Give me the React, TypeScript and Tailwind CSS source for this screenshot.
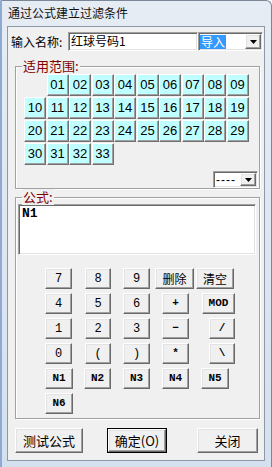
import React from 'react';

const raised =
  'border border-t-white border-l-white border-b-[#696969] border-r-[#696969] shadow-[inset_-1px_-1px_0_#a0a0a0,inset_1px_1px_0_#e3e3e3]';
const sunken =
  'border border-t-[#a0a0a0] border-l-[#a0a0a0] border-b-white border-r-white shadow-[inset_1px_1px_0_#696969,inset_-1px_-1px_0_#e3e3e3]';

const nums = Array.from({ length: 33 }, (_, i) => String(i + 1).padStart(2, '0'));

// calculator rows: label, width/margin classes, bold?
const calcRows: { t: string; c: string; b?: boolean }[][] = [
  [
    { t: '7', c: 'ml-[27px] w-[27px]' },
    { t: '8', c: 'ml-[13px] w-[26px]' },
    { t: '9', c: 'ml-[12px] w-[27px]' },
    { t: '删除', c: 'ml-[5px] w-[39px]' },
    { t: '清空', c: 'ml-[2px] w-[38px]' },
  ],
  [
    { t: '4', c: 'ml-[27px] w-[27px]' },
    { t: '5', c: 'ml-[13px] w-[26px]' },
    { t: '6', c: 'ml-[12px] w-[27px]' },
    { t: '+', c: 'ml-[12px] w-[27px]', b: true },
    { t: 'MOD', c: 'ml-[13px] w-[33px]', b: true },
  ],
  [
    { t: '1', c: 'ml-[27px] w-[27px]' },
    { t: '2', c: 'ml-[13px] w-[26px]' },
    { t: '3', c: 'ml-[12px] w-[27px]' },
    { t: '−', c: 'ml-[12px] w-[27px]', b: true },
    { t: '/', c: 'ml-[20px] w-[26px]', b: true },
  ],
  [
    { t: '0', c: 'ml-[27px] w-[27px]' },
    { t: '(', c: 'ml-[13px] w-[26px]' },
    { t: ')', c: 'ml-[12px] w-[27px]' },
    { t: '*', c: 'ml-[12px] w-[27px]', b: true },
    { t: '\\', c: 'ml-[20px] w-[26px]', b: true },
  ],
  [
    { t: 'N1', c: 'ml-[27px] w-[28px]', b: true },
    { t: 'N2', c: 'ml-[11px] w-[27px]', b: true },
    { t: 'N3', c: 'ml-[12px] w-[27px]', b: true },
    { t: 'N4', c: 'ml-[12px] w-[27px]', b: true },
    { t: 'N5', c: 'ml-[12px] w-[28px]', b: true },
  ],
  [{ t: 'N6', c: 'ml-[27px] w-[28px]', b: true }],
];

const DropArrow = () => (
  <svg width="7" height="4" viewBox="0 0 7 4">
    <polygon points="0,0 7,0 3.5,4" fill="#000" />
  </svg>
);

const App = () => {
  return (
    <div className="w-[272px] h-[467px] overflow-hidden bg-[linear-gradient(180deg,#e6ecf4,#d5e0ee)] border-l-[2px] border-l-[#8eaad3] rounded-tr-[6px] border-t border-r border-[#7a8797] font-['Noto_Sans_CJK_SC',sans-serif] text-[12px] text-black">
      {/* title bar */}
      <div className="h-[25px] pl-[6px] pt-[5px] leading-[14px] text-[12px] text-[#111]">通过公式建立过滤条件</div>

      <div className="ml-[5px] w-[258px] h-[435px] bg-[#f0f0f0] border border-[#8c99a8]">
        {/* name row */}
        <div className="mt-[5px] pl-[3px] flex items-start h-[19px]">
          <div className="w-[57px] leading-[19px]">输入名称:</div>
          <div className={`w-[130px] h-[19px] bg-white ${sunken} pl-[2px] leading-[15px] text-[12px]`}>红球号码1</div>
          <div className={`w-[65px] h-[19px] bg-white ${sunken} flex items-center pl-[1px] pr-[1px]`}>
            <span className="bg-[#3399ff] text-white leading-[14px] w-[26px] pl-[1px]">导入</span>
            <div className={`ml-auto w-[16px] h-[15px] bg-[#f0f0f0] ${raised} flex items-center justify-center`}>
              <DropArrow />
            </div>
          </div>
        </div>

        {/* range group */}
        <div className="relative mt-[15px] ml-[7px] w-[245px] border border-[#a0a0a0] shadow-[1px_1px_0_#fff,inset_1px_1px_0_#fff] pl-[8px] pt-[7px] flex flex-col">
          <span className="absolute -top-[9px] left-[6px] bg-[#f0f0f0] px-[1px] leading-[16px] text-[13px] text-[#800000]">适用范围:</span>
          <div className="grid grid-cols-[repeat(10,22.5px)] gap-y-[1px] font-['Liberation_Sans',sans-serif] text-[13px]">
            {nums.map((n, i) => (
              <div
                key={n}
                className={`${i === 0 ? 'col-start-2' : ''} w-[22px] h-[22px] bg-[#c0ffff] border border-t-white border-l-white border-b-[#707070] border-r-[#707070] shadow-[inset_-1px_-1px_0_#a0a0a0] flex items-center justify-center`}
              >
                {n}
              </div>
            ))}
          </div>
          <div className={`mt-[6px] ml-auto mr-[1px] w-[45px] h-[17px] bg-white ${sunken} flex items-center pl-[2px] pr-[1px]`}>
            <span className="font-['Liberation_Sans',sans-serif] leading-[12px] tracking-[1px]">----</span>
            <div className={`ml-auto w-[16px] h-[13px] bg-[#f0f0f0] ${raised} flex items-center justify-center`}>
              <DropArrow />
            </div>
          </div>
        </div>

        {/* formula group */}
        <div className="relative mt-[8px] ml-[7px] w-[245px] border border-[#a0a0a0] shadow-[1px_1px_0_#fff,inset_1px_1px_0_#fff] pl-[2px] pt-[6px] pb-[4px]">
          <span className="absolute -top-[9px] left-[6px] bg-[#f0f0f0] px-[1px] leading-[16px] text-[13px] text-[#800000]">公式:</span>
          <div className={`w-[238px] h-[51px] bg-white ${sunken} pl-[3px] pt-[2px] font-['Liberation_Mono',monospace] font-bold text-[13px] leading-[14px]`}>
            N1
          </div>
          <div className="mt-[13px] flex flex-col gap-[4px]">
            {calcRows.map((row, ri) => (
              <div key={ri} className="flex h-[21px]">
                {row.map((b) => (
                  <div
                    key={b.t}
                    className={`${b.c} h-[21px] bg-[#f0f0f0] ${raised} flex items-center justify-center leading-none ${
                      b.b ? "font-['Liberation_Mono',monospace] font-bold text-[11px]" : /[0-9()]/.test(b.t) ? "font-['Liberation_Mono',monospace] text-[12px]" : 'text-[12px]'
                    }`}
                  >
                    {b.t}
                  </div>
                ))}
              </div>
            ))}
          </div>
        </div>

        {/* bottom buttons */}
        <div className="mt-[9px] ml-[7px] flex h-[25px] text-[13px]">
          <div className={`w-[68px] h-[25px] bg-[#f0f0f0] ${raised} flex items-center justify-center`}>测试公式</div>
          <div className="ml-[24px] w-[60px] h-[25px] border border-black">
            <div className={`w-full h-full bg-[#f0f0f0] ${raised} flex items-center justify-center`}>确定(O)</div>
          </div>
          <div className={`ml-[30px] w-[61px] h-[25px] bg-[#f0f0f0] ${raised} flex items-center justify-center`}>关闭</div>
        </div>
      </div>
    </div>
  );
};

export default App;
